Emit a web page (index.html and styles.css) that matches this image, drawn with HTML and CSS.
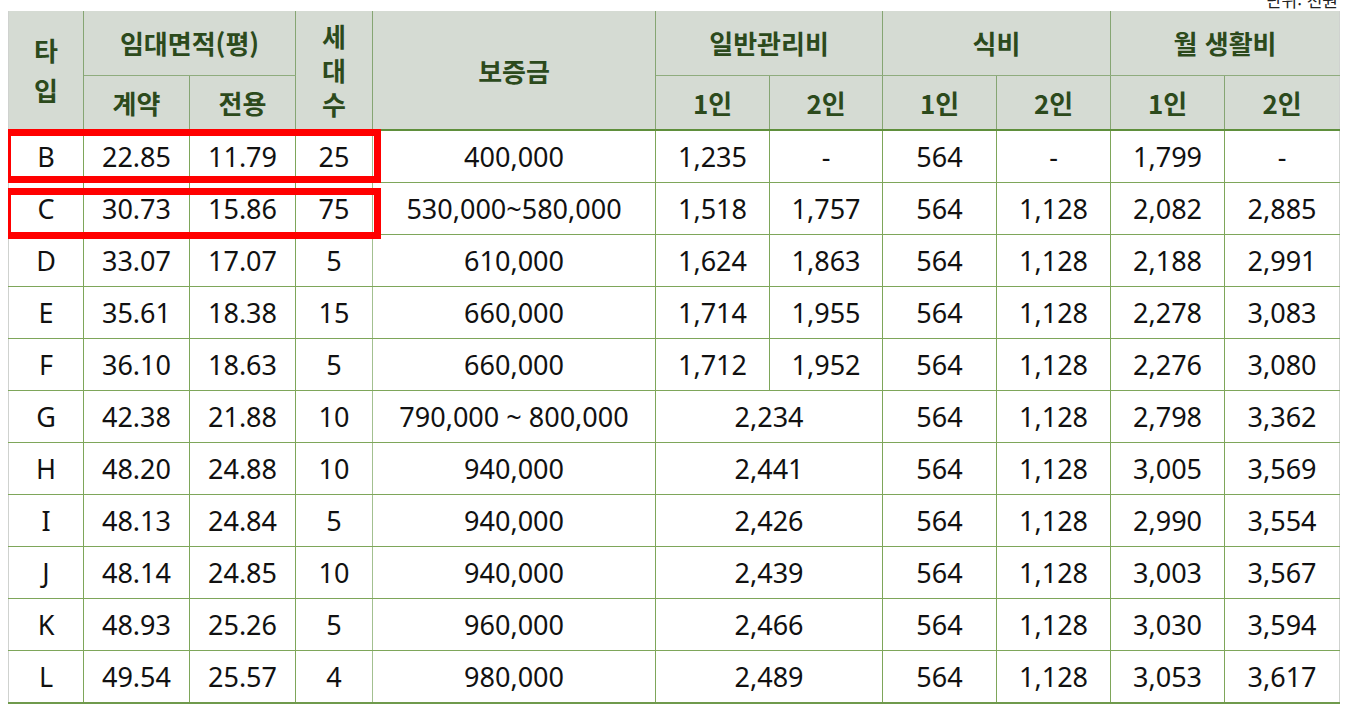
FILE: index.html
```html
<!DOCTYPE html>
<html lang="ko">
<head>
<meta charset="utf-8">
<title>임대료 표</title>
<link rel="stylesheet" href="styles.css">
</head>
<body>
<div class="unit"><span>단위: 천원</span></div>
<div class="wrap">
<table class="rent">
<colgroup>
<col class="c75"><col class="c106"><col class="c106"><col class="c77"><col class="c283">
<col class="c114"><col class="c113"><col class="c114"><col class="c114"><col class="c114"><col class="c115">
</colgroup>
<thead>
<tr class="h1">
<th rowspan="2" class="stack2">타<br>입</th>
<th colspan="2">임대면적(평)</th>
<th rowspan="2" class="stack3">세<br>대<br>수</th>
<th rowspan="2">보증금</th>
<th colspan="2">일반관리비</th>
<th colspan="2">식비</th>
<th colspan="2">월 생활비</th>
</tr>
<tr class="h2">
<th>계약</th><th>전용</th>
<th>1인</th><th>2인</th>
<th>1인</th><th>2인</th>
<th>1인</th><th>2인</th>
</tr>
</thead>
<tbody>
<tr><td>B</td><td>22.85</td><td>11.79</td><td>25</td><td>400,000</td><td>1,235</td><td>-</td><td>564</td><td>-</td><td>1,799</td><td>-</td></tr>
<tr><td>C</td><td>30.73</td><td>15.86</td><td>75</td><td>530,000~580,000</td><td>1,518</td><td>1,757</td><td>564</td><td>1,128</td><td>2,082</td><td>2,885</td></tr>
<tr><td>D</td><td>33.07</td><td>17.07</td><td>5</td><td>610,000</td><td>1,624</td><td>1,863</td><td>564</td><td>1,128</td><td>2,188</td><td>2,991</td></tr>
<tr><td>E</td><td>35.61</td><td>18.38</td><td>15</td><td>660,000</td><td>1,714</td><td>1,955</td><td>564</td><td>1,128</td><td>2,278</td><td>3,083</td></tr>
<tr><td>F</td><td>36.10</td><td>18.63</td><td>5</td><td>660,000</td><td>1,712</td><td>1,952</td><td>564</td><td>1,128</td><td>2,276</td><td>3,080</td></tr>
<tr><td>G</td><td>42.38</td><td>21.88</td><td>10</td><td>790,000 ~ 800,000</td><td colspan="2">2,234</td><td>564</td><td>1,128</td><td>2,798</td><td>3,362</td></tr>
<tr><td>H</td><td>48.20</td><td>24.88</td><td>10</td><td>940,000</td><td colspan="2">2,441</td><td>564</td><td>1,128</td><td>3,005</td><td>3,569</td></tr>
<tr><td>I</td><td>48.13</td><td>24.84</td><td>5</td><td>940,000</td><td colspan="2">2,426</td><td>564</td><td>1,128</td><td>2,990</td><td>3,554</td></tr>
<tr><td>J</td><td>48.14</td><td>24.85</td><td>10</td><td>940,000</td><td colspan="2">2,439</td><td>564</td><td>1,128</td><td>3,003</td><td>3,567</td></tr>
<tr><td>K</td><td>48.93</td><td>25.26</td><td>5</td><td>960,000</td><td colspan="2">2,466</td><td>564</td><td>1,128</td><td>3,030</td><td>3,594</td></tr>
<tr><td>L</td><td>49.54</td><td>25.57</td><td>4</td><td>980,000</td><td colspan="2">2,489</td><td>564</td><td>1,128</td><td>3,053</td><td>3,617</td></tr>
</tbody>
</table>
<div class="mark mark-b"></div>
<div class="mark mark-c"></div>
</div>
</body>
</html>
```
FILE: styles.css
```css
html, body {
  background: #ffffff;
}
body {
  margin: 0 0 0 8px;
  font-family: "Noto Sans", "Noto Sans CJK KR", sans-serif;
  color: #111111;
}
.unit {
  width: 1331px;
  height: 11px;
  overflow: hidden;
  display: flex;
  justify-content: flex-end;
  align-items: flex-end;
}
.unit span {
  font-family: "Noto Sans CJK KR", sans-serif;
  font-size: 17px;
  line-height: 22px;
  color: #222;
  margin-right: 1px;
}
.wrap {
  position: relative;
  width: 1331px;
}
.rent {
  width: 1331px;
  table-layout: fixed;
  border-collapse: collapse;
  border-left: 1px solid #cfd2cf;
  border-right: 1px solid #cfd2cf;
}
.c75 { width: 75px; }
.c77 { width: 77px; }
.c106 { width: 106px; }
.c113 { width: 113px; }
.c114 { width: 114px; }
.c115 { width: 115px; }
.c283 { width: 283px; }
.rent th {
  background: #d5dbd3;
  color: #2c4a1c;
  font-family: "Noto Sans CJK KR", sans-serif;
  font-weight: 700;
  font-size: 26px;
  padding: 0;
  border: 1px solid #86a573;
  border-top: none;
  vertical-align: middle;
  text-align: center;
}
.rent th:first-child { border-left: none; }
.rent th:last-child { border-right: none; }
.rent .h1 th { border-bottom-color: #8fac7e; }
.rent .h2 th { border-bottom: 2px solid #5f8f3c; padding-top: 0; }
.rent th[rowspan] { border-bottom: 2px solid #5f8f3c; }
.rent .h1 { height: 64px; }
.rent .h2 { height: 55px; }
.stack2 { line-height: 40px; }
.stack3 { line-height: 34px; }
.rent td {
  height: 51px;
  padding: 0;
  text-align: center;
  vertical-align: middle;
  font-size: 27px;
  border: 1px solid #7ea65a;
}
.rent td:first-child { border-left: 1px solid #cfd2cf; }
.rent td:last-child { border-right: 1px solid #cfd2cf; }
.rent td:nth-child(4) { border-right-color: #a3c090; }
.rent tbody tr:last-child td { border-bottom: 2px solid #6f9a4c; }
.mark {
  position: absolute;
  left: -4px;
  width: 377px;
  box-sizing: border-box;
  border: 7px solid #ff0000;
}
.mark-b { top: 118px; height: 54px; }
.mark-c { top: 177px; height: 51px; }
```
